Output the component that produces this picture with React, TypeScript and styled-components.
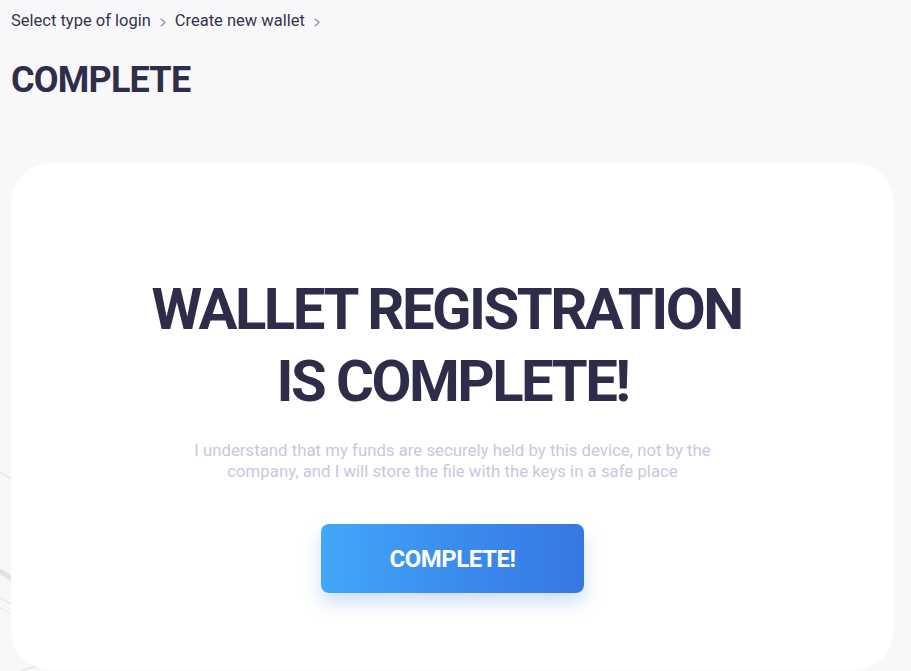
import React from "react";
import styled, { createGlobalStyle } from "styled-components";

const GlobalStyle = createGlobalStyle`
  html, body { margin: 0; padding: 0; background: #f8f8fa; }
  body { font-family: Roboto, "Liberation Sans", sans-serif; color: #2f2e4a; overflow: hidden; }
  * { box-sizing: border-box; }
`;

const Page = styled.div`
  position: relative;
  min-height: 671px;
  padding: 11px 17px 0 11px;
  display: flex;
  flex-direction: column;
`;

const Decor = styled.svg`
  position: absolute;
  left: 0;
  top: 420px;
  width: 120px;
  height: 251px;
  z-index: 0;
`;

const Breadcrumbs = styled.nav`
  display: flex;
  align-items: center;
  gap: 8px;
  height: 20px;
  font-size: 16.5px;
  line-height: 20px;
  position: relative;
  z-index: 1;
`;

const Crumb = styled.span`
  color: #35344f;
`;

const Chevron = styled.svg`
  width: 6px;
  height: 9px;
  margin: 2px 1px 0;
`;

const PageTitle = styled.h1`
  margin: 27px 0 0;
  font-size: 36px;
  line-height: 44px;
  font-weight: 700;
  letter-spacing: -0.8px;
  color: #2f2e4a;
  position: relative;
  z-index: 1;
`;

const Card = styled.section`
  position: relative;
  z-index: 1;
  margin-top: 61px;
  background: #ffffff;
  border-radius: 40px;
  padding: 110px 40px 77px;
  display: flex;
  flex-direction: column;
  align-items: center;
`;

const Headline = styled.h2`
  margin: 0;
  font-size: 58px;
  line-height: 72px;
  font-weight: 700;
  letter-spacing: -2.5px;
  text-align: center;
  color: #2e2d49;
`;

const Note = styled.p`
  margin: 23px 0 0;
  max-width: 540px;
  font-size: 16.8px;
  line-height: 21px;
  text-align: center;
  color: #c9c7dc;
`;

const Button = styled.button`
  margin-top: 42px;
  width: 263px;
  height: 69px;
  border: none;
  border-radius: 8px;
  background: linear-gradient(90deg, #43a7fa 0%, #3a8aec 55%, #3777e3 100%);
  box-shadow: 0 10px 18px rgba(62, 128, 235, 0.25);
  color: #ffffff;
  font-family: Roboto, "Liberation Sans", sans-serif;
  font-size: 24px;
  font-weight: 700;
  letter-spacing: -0.5px;
  cursor: pointer;
`;

const ChevronIcon = () => (
  <Chevron viewBox="0 0 6 9" fill="none">
    <polyline points="1,1 5,4.5 1,8" stroke="#8d8c9c" strokeWidth="1.1" strokeLinecap="round" strokeLinejoin="round" />
  </Chevron>
);

export default function App() {
  return (
    <>
      <GlobalStyle />
      <Page>
        <Decor viewBox="0 0 120 251" fill="none">
          <path d="M-20 40 C 0 52, 10 58, 30 70" stroke="#e6e6ea" strokeWidth="1.5" />
          <path d="M-20 140 C 0 150, 14 160, 30 172" stroke="#e2e2e6" strokeWidth="5" />
          <path d="M-20 168 C 0 176, 14 186, 30 196" stroke="#e8e8ec" strokeWidth="1.5" />
          <path d="M-20 178 C 0 186, 14 196, 30 206" stroke="#ebebef" strokeWidth="1.2" />
          <path d="M10 260 C 18 250, 30 246, 50 246" stroke="#e6e6ea" strokeWidth="1.5" />
        </Decor>
        <Breadcrumbs>
          <Crumb>Select type of login</Crumb>
          <ChevronIcon />
          <Crumb>Create new wallet</Crumb>
          <ChevronIcon />
        </Breadcrumbs>
        <PageTitle>COMPLETE</PageTitle>
        <Card>
          <Headline>
            WALLET REGISTRATION{"\u00a0"}
            <br />
            IS COMPLETE!
          </Headline>
          <Note>
            I understand that my funds are securely held by this device, not by the company, and I will store the file with the keys in a safe place
          </Note>
          <Button>COMPLETE!</Button>
        </Card>
      </Page>
    </>
  );
}
